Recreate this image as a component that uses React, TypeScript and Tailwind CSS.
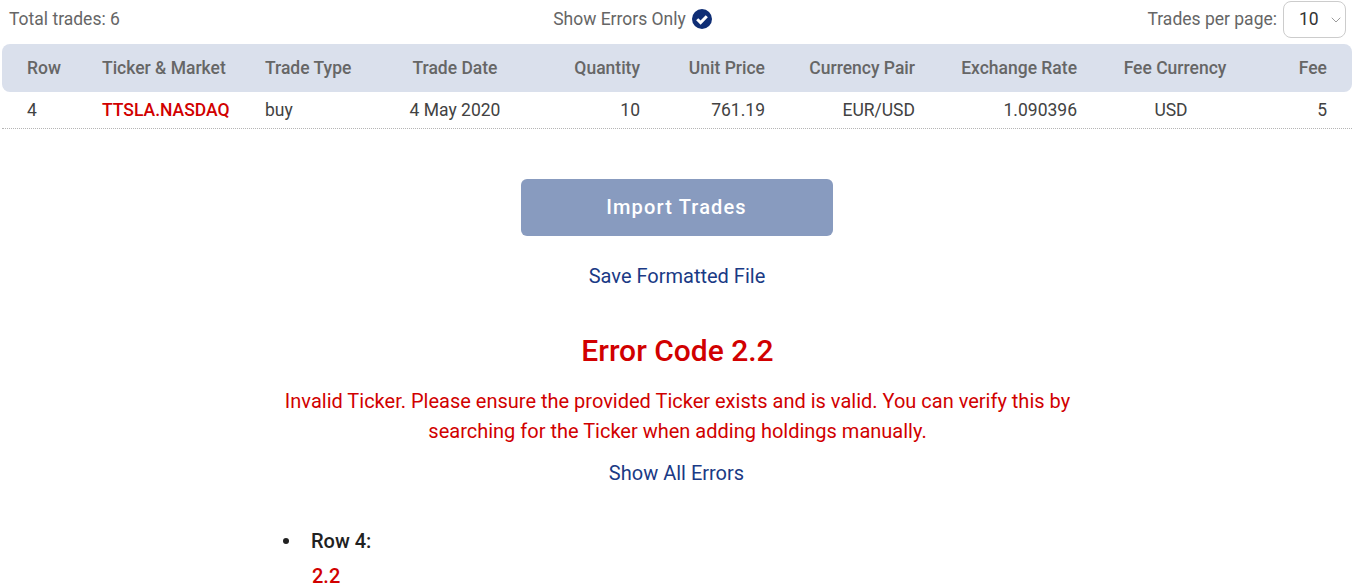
import { ChevronDown } from "lucide-react";

const COLS = "grid grid-cols-[100px_163px_120px_140px_115px_125px_150px_162px_196px_79px]";

const HEADERS = [
  { label: "Row", className: "pl-[25px]" },
  { label: "Ticker & Market", className: "" },
  { label: "Trade Type", className: "" },
  { label: "Trade Date", className: "text-center" },
  { label: "Quantity", className: "text-right" },
  { label: "Unit Price", className: "text-right" },
  { label: "Currency Pair", className: "text-right" },
  { label: "Exchange Rate", className: "text-right" },
  { label: "Fee Currency", className: "text-center" },
  { label: "Fee", className: "text-right pr-[25px]" },
];

function CheckBadge() {
  return (
    <svg viewBox="0 0 20 20" className="h-5 w-5 shrink-0">
      <circle cx="10" cy="10" r="10" fill="#0f2e75" />
      <path d="M5.2 10.2l3.4 3.4 6.2-6.4" fill="none" stroke="#fff" strokeWidth="3" />
    </svg>
  );
}

export default function App() {
  return (
    <div className="h-[586px] w-[1353px] bg-white font-['Roboto',sans-serif] text-[17.5px] text-[#212121]">
      <div className="flex h-[44px] items-start justify-between pl-[9px] pr-[7px] text-[#666666]">
        <div className="w-[310px] pt-[7px] leading-[24px]">Total trades: 6</div>
        <div className="flex items-center gap-[6px] pt-[7px] leading-[24px]">
          Show Errors Only
          <CheckBadge />
        </div>
        <div className="flex w-[400px] items-start justify-end gap-[6px]">
          <span className="pt-[7px] leading-[24px]">Trades per page:</span>
          <div className="mt-[1px] flex h-[37px] w-[63px] items-center justify-between rounded-[8px] border border-[#cccccc] pl-[15px] pr-[1px] text-[#333333]">
            10
            <ChevronDown className="h-4 w-4 text-[#888888]" strokeWidth={1.25} />
          </div>
        </div>
      </div>

      <div className="mx-[2px] w-[1350px]">
        <div className={`${COLS} h-[48px] items-center rounded-[8px] bg-[#dae0ec] font-medium text-[#666666]`}>
          {HEADERS.map((h) => (
            <div key={h.label} className={h.className}>
              {h.label}
            </div>
          ))}
        </div>
        <div className={`${COLS} h-[37px] items-center border-b border-dotted border-[#b5b5b5] text-[#424242]`}>
          <div className="pl-[25px]">4</div>
          <div className="font-medium text-[#d10000]">TTSLA.NASDAQ</div>
          <div>buy</div>
          <div className="text-center">4 May 2020</div>
          <div className="text-right">10</div>
          <div className="text-right">761.19</div>
          <div className="text-right">EUR/USD</div>
          <div className="text-right">1.090396</div>
          <div className="pr-[8px] text-center">USD</div>
          <div className="pr-[25px] text-right">5</div>
        </div>
      </div>

      <div className="flex flex-col items-center">
        <button className="mt-[50px] h-[57px] w-[312px] rounded-[6px] bg-[#889bbf] pb-[2px] text-[20px] font-medium tracking-[1.15px] text-white">
          Import Trades
        </button>
        <a className="mt-[28px] pl-[1px] text-[20px] leading-[24px] text-[#1a3a85]">Save Formatted File</a>
        <h2 className="mt-[43px] pl-[2px] text-[30px] font-medium leading-[40px] text-[#d10000]">Error Code 2.2</h2>
        <p className="mt-[15px] w-[800px] pl-[2px] text-center text-[20px] leading-[30px] text-[#d10000]">
          Invalid Ticker. Please ensure the provided Ticker exists and is valid. You can verify this by searching for the Ticker when adding holdings manually.
        </p>
        <a className="mt-[15px] text-[20px] leading-[24px] text-[#1a3a85]">Show All Errors</a>
      </div>

      <ul className="ml-[283px] mt-[44px] list-none">
        <li className="flex items-center text-[20px] font-medium leading-[24px]">
          <span className="h-[6px] w-[6px] rounded-full bg-[#212121]" />
          <span className="ml-[22px]">Row 4:</span>
        </li>
        <li className="ml-[29px] mt-[14px] text-[20px] font-medium leading-[19px] text-[#d10000]">2.2</li>
      </ul>
    </div>
  );
}
